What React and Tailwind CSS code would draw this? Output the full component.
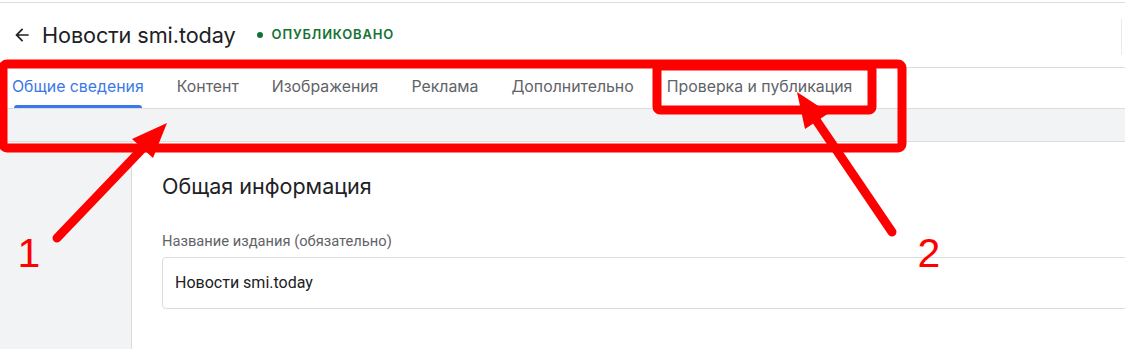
import React from "react";

const tabs = ["Общие сведения", "Контент", "Изображения", "Реклама", "Дополнительно", "Проверка и публикация"];

export default function App() {
  return (
    <div className="relative w-[1125px] h-[349px] overflow-hidden bg-white" style={{ fontFamily: "Inter, 'Open Sans', sans-serif" }}>
      <div className="h-[2px] bg-white" />
      {/* Header */}
      <div className="h-[66px] border-y border-[#dadce0] flex items-center pl-[12px] relative">
        <svg width="20" height="20" viewBox="0 0 24 24" className="text-[#202124]">
          <path d="M20 11H7.83l5.59-5.59L12 4l-8 8 8 8 1.41-1.41L7.83 13H20v-2z" fill="currentColor" />
        </svg>
        <span className="ml-[10px] text-[21.7px] text-[#202124] tracking-[-0.1px]">Новости smi.today</span>
        <span className="ml-[21px] w-[6px] h-[6px] rounded-full bg-[#137333]" />
        <span className="ml-[9px] text-[13px] font-semibold text-[#137333] tracking-[0.8px]">ОПУБЛИКОВАНО</span>
        <div className="absolute right-0 top-[16px] w-[4px] h-[36px] border-l border-[#e8eaed]" />
      </div>
      {/* Tabs */}
      <div className="h-[40px] flex pl-[12px] gap-[33px]">
        {tabs.map((t, i) => (
          <div key={t} className="h-full flex flex-col">
            <div className={`flex-1 flex items-center text-[15.85px] ${i === 0 ? "text-[#3b78e7]" : "text-[#5f6368]"}`}>{t}</div>
            <div className={`h-[3px] mx-[2px] rounded-t-[3px] ${i === 0 ? "bg-[#3b78e7]" : "bg-transparent"}`} />
          </div>
        ))}
      </div>
      <div className="h-[34px] bg-[#f1f3f4] border-y border-[#dadce0]" />
      {/* Main */}
      <div className="flex h-[207px]">
        <div className="w-[132px] shrink-0 bg-[#f1f3f4] border-r border-[#dadce0]" />
        <div className="flex-1 pl-[30px] pt-[30px] overflow-hidden">
          <div className="text-[21.5px] leading-[28px] font-normal text-[#202124]">Общая информация</div>
          <div className="mt-[31px] text-[14.7px] leading-[20px] text-[#5f6368]" style={{ fontFamily: "Roboto, sans-serif" }}>Название издания (обязательно)</div>
          <div className="mt-[6px] w-[1100px] h-[52px] border border-[#dadce0] rounded-[4px] flex items-center pl-[12px] text-[16px] text-[#202124]" style={{ fontFamily: "Roboto, sans-serif" }}>
            Новости smi.today
          </div>
        </div>
      </div>
      {/* Annotation overlay */}
      <svg className="absolute inset-0 pointer-events-none" width="1125" height="349" viewBox="0 0 1125 349">
        <rect x="3" y="64" width="899" height="84" rx="4" fill="none" stroke="#ff0000" strokeWidth="9" />
        <rect x="657" y="66" width="215" height="44" rx="3" fill="none" stroke="#ff0000" strokeWidth="9" />
        <line x1="57" y1="238" x2="145" y2="146" stroke="#ff0000" strokeWidth="9" strokeLinecap="round" />
        <polygon points="167,123 153,158 132,139" fill="#ff0000" />
        <line x1="892" y1="232" x2="814" y2="117" stroke="#ff0000" strokeWidth="9" strokeLinecap="round" />
        <polygon points="797,92 829,113 805,129" fill="#ff0000" />
        <text x="29" y="267" textAnchor="middle" fill="#ff0000" fontSize="41" fontFamily="'Liberation Sans', sans-serif">1</text>
        <text x="929" y="267" textAnchor="middle" fill="#ff0000" fontSize="41" fontFamily="'Liberation Sans', sans-serif">2</text>
      </svg>
    </div>
  );
}
